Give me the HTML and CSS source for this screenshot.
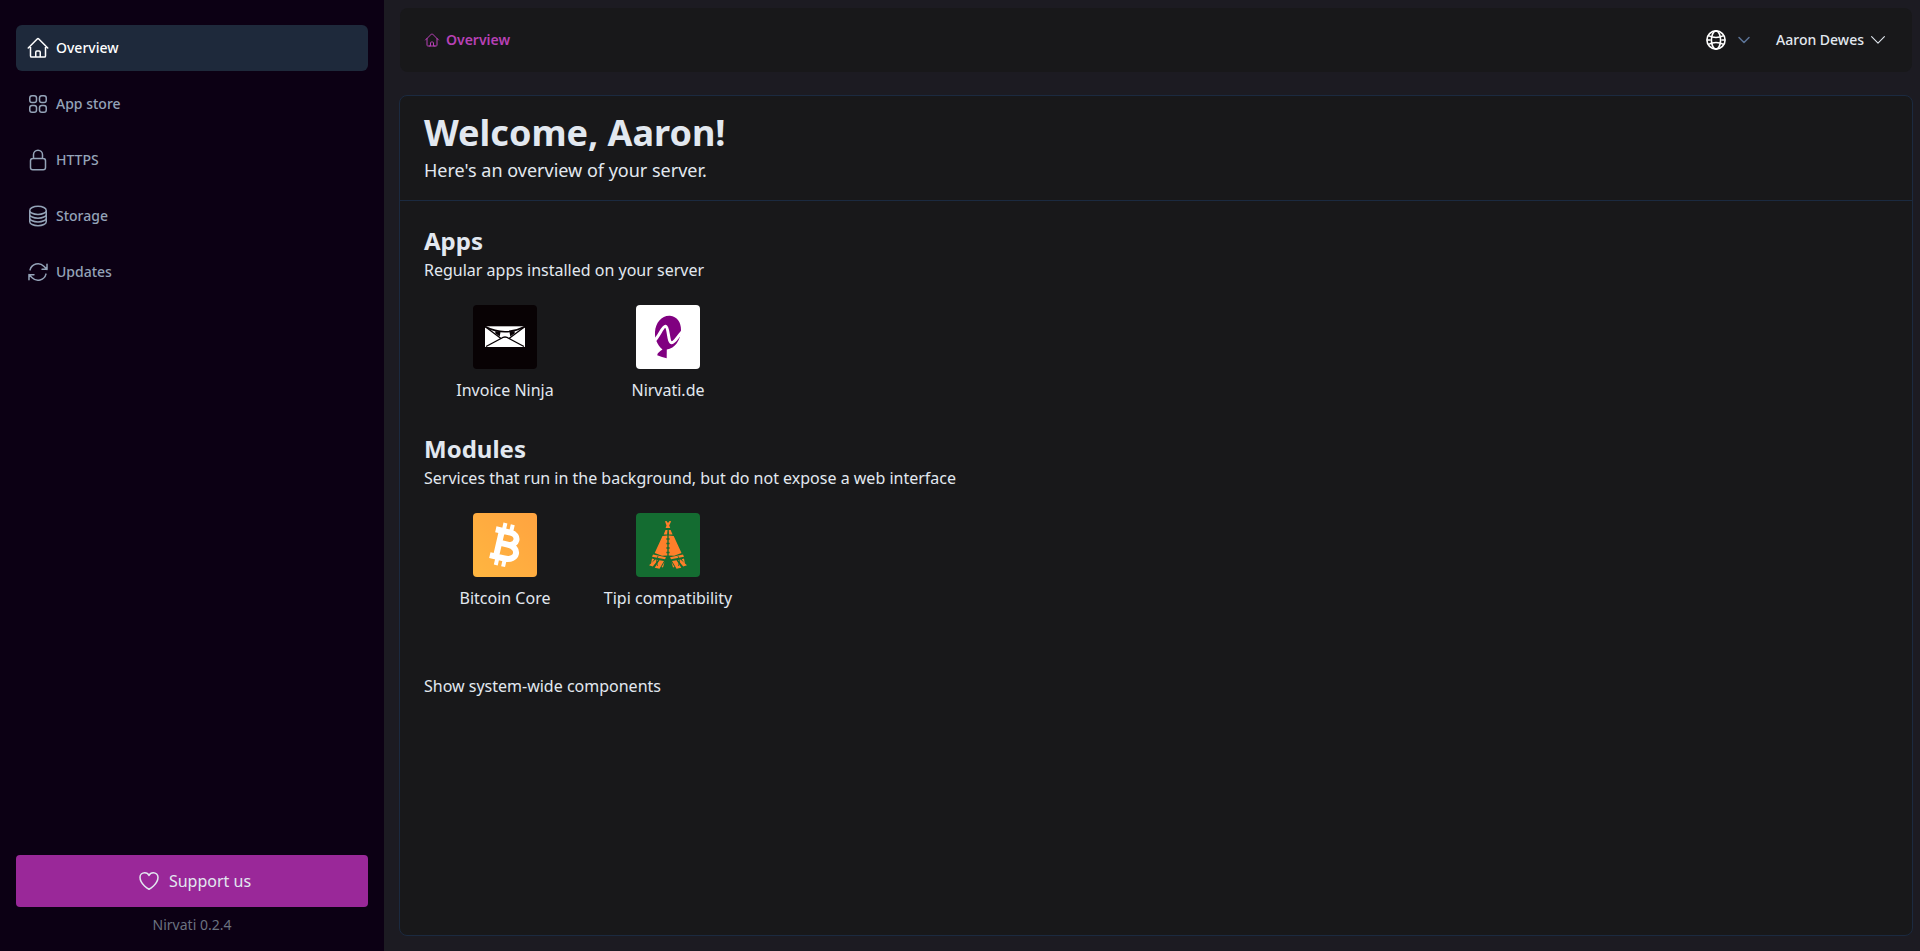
FILE: index.html
```html
<!DOCTYPE html>
<html lang="en">
<head>
    <meta charset="UTF-8">
    <meta name="viewport" content="width=device-width, initial-scale=1.0">
    <title>Nirvati</title>
    <link rel="stylesheet" href="styles.css">
</head>
<body>
    <aside class="sidebar">
        <nav class="menu">
            <a class="menu-item active">
                <svg class="icon" viewBox="0 0 24 24"><path d="m2.25 12 8.954-8.955c.44-.439 1.152-.439 1.591 0L21.75 12M4.5 9.75v10.125c0 .621.504 1.125 1.125 1.125H9.75v-4.875c0-.621.504-1.125 1.125-1.125h2.25c.621 0 1.125.504 1.125 1.125V21h4.125c.621 0 1.125-.504 1.125-1.125V9.75M8.25 21h8.25"/></svg>
                <span>Overview</span>
            </a>
            <a class="menu-item">
                <svg class="icon" viewBox="0 0 24 24"><path d="M3.75 6A2.25 2.25 0 0 1 6 3.75h2.25A2.25 2.25 0 0 1 10.5 6v2.25a2.25 2.25 0 0 1-2.25 2.25H6a2.25 2.25 0 0 1-2.25-2.25V6ZM3.75 15.75A2.25 2.25 0 0 1 6 13.5h2.25a2.25 2.25 0 0 1 2.25 2.25V18a2.25 2.25 0 0 1-2.25 2.25H6A2.25 2.25 0 0 1 3.75 18v-2.25ZM13.5 6a2.25 2.25 0 0 1 2.25-2.25H18A2.25 2.25 0 0 1 20.25 6v2.25A2.25 2.25 0 0 1 18 10.5h-2.25a2.25 2.25 0 0 1-2.25-2.25V6ZM13.5 15.75a2.25 2.25 0 0 1 2.25-2.25H18a2.25 2.25 0 0 1 2.25 2.25V18A2.25 2.25 0 0 1 18 20.25h-2.25A2.25 2.25 0 0 1 13.5 18v-2.25Z"/></svg>
                <span>App store</span>
            </a>
            <a class="menu-item">
                <svg class="icon" viewBox="0 0 24 24"><path d="M16.5 10.5V6.75a4.5 4.5 0 1 0-9 0v3.75m-.75 11.25h10.5a2.25 2.25 0 0 0 2.25-2.25v-6.75a2.25 2.25 0 0 0-2.25-2.25H6.75a2.25 2.25 0 0 0-2.25 2.25v6.75a2.25 2.25 0 0 0 2.25 2.25Z"/></svg>
                <span>HTTPS</span>
            </a>
            <a class="menu-item">
                <svg class="icon" viewBox="0 0 24 24"><path d="M20.25 6.375c0 2.278-3.694 4.125-8.25 4.125S3.75 8.653 3.75 6.375m16.5 0c0-2.278-3.694-4.125-8.25-4.125S3.75 4.097 3.75 6.375m16.5 0v11.25c0 2.278-3.694 4.125-8.25 4.125s-8.25-1.847-8.25-4.125V6.375m16.5 0v3.75m-16.5-3.75v3.75m16.5 0v3.75C20.25 16.153 16.556 18 12 18s-8.25-1.847-8.25-4.125v-3.75m16.5 0c0 2.278-3.694 4.125-8.25 4.125s-8.25-1.847-8.25-4.125"/></svg>
                <span>Storage</span>
            </a>
            <a class="menu-item">
                <svg class="icon" viewBox="0 0 24 24"><path d="M16.023 9.348h4.992v-.001M2.985 19.644v-4.992m0 0h4.992m-4.993 0 3.181 3.183a8.25 8.25 0 0 0 13.803-3.7M4.031 9.865a8.25 8.25 0 0 1 13.803-3.7l3.181 3.182m0-4.991v4.99"/></svg>
                <span>Updates</span>
            </a>
        </nav>
        <div class="sidebar-footer">
            <a class="support">
                <svg class="icon" viewBox="0 0 24 24"><path d="M21 8.25c0-2.485-2.099-4.5-4.688-4.5-1.935 0-3.597 1.126-4.312 2.733-.715-1.607-2.377-2.733-4.313-2.733C5.1 3.75 3 5.765 3 8.25c0 7.22 9 12 9 12s9-4.78 9-12Z"/></svg>
                <span>Support us</span>
            </a>
            <p class="version">Nirvati 0.2.4</p>
        </div>
    </aside>

    <main class="content">
        <header class="topbar">
            <div class="breadcrumb">
                <svg class="icon small" viewBox="0 0 24 24"><path d="m2.25 12 8.954-8.955c.44-.439 1.152-.439 1.591 0L21.75 12M4.5 9.75v10.125c0 .621.504 1.125 1.125 1.125H9.75v-4.875c0-.621.504-1.125 1.125-1.125h2.25c.621 0 1.125.504 1.125 1.125V21h4.125c.621 0 1.125-.504 1.125-1.125V9.75M8.25 21h8.25"/></svg>
                <span>Overview</span>
            </div>
            <div class="topbar-right">
                <div class="language">
                    <svg class="globe" viewBox="0 0 20 20">
                        <circle cx="10" cy="10" r="9.1"/>
                        <ellipse cx="10" cy="10" rx="4.6" ry="9.1"/>
                        <path d="M2.3 5.6c4.6 2.2 10.8 2.2 15.4 0M2.3 14.4c4.6-2.2 10.8-2.2 15.4 0M1 10h3.6M15.4 10H19"/>
                    </svg>
                    <svg class="icon small chevron" viewBox="0 0 24 24"><path d="m19.5 8.25-7.5 7.5-7.5-7.5"/></svg>
                </div>
                <div class="user">
                    <span>Aaron Dewes</span>
                    <svg class="icon small" viewBox="0 0 16 16"><path d="m1.6 4.7 6.4 6.4 6.4-6.4"/></svg>
                </div>
            </div>
        </header>

        <section class="card">
            <div class="card-header">
                <h1>Welcome, Aaron!</h1>
                <p>Here's an overview of your server.</p>
            </div>
            <div class="card-body">
                <h2>Apps</h2>
                <p>Regular apps installed on your server</p>
                <div class="apps">
                    <a class="app">
                        <svg class="app-icon" viewBox="0 0 64 64">
                            <rect width="64" height="64" fill="#080204"/>
                            <rect x="12" y="21.3" width="40" height="20.7" fill="#fff"/>
                            <path d="M12 21.5 28 33.5M52 21.5 36 33.5M13 41.5 28 33.5Q32 30.5 36 33.5L51 41.5" fill="none" stroke="#080204" stroke-width="1.4"/>
                            <path d="M12 21.5Q32 32 52 21.5" fill="none" stroke="#080204" stroke-width="1.5"/>
                            <path d="m22.5 26 5 1.2-.8 4.2-4.5-3.2ZM41.5 26l-5 1.2.8 4.2 4.5-3.2Z" fill="#080204"/>
                        </svg>
                        <span>Invoice Ninja</span>
                    </a>
                    <a class="app">
                        <svg class="app-icon" viewBox="0 0 64 64">
                            <rect width="64" height="64" fill="#fff"/>
                            <path d="M34 10.7C41 11.2 45.2 17.5 45 25 44.7 35 39 43.5 30.8 44.5L30.7 53.2 26 52 21.2 50.3C21.3 48 24 46.5 26.5 44.6 21 40 18.5 33 19 27 19.5 17.5 26 10.2 34 10.7Z" fill="#800080"/>
                            <path d="M18.5 35.5C23 32 26.5 21 29.5 21.3 33 22 31.8 37.8 35.7 37.7 39 37.5 41.5 31.5 46 27" fill="none" stroke="#fff" stroke-width="3"/>
                        </svg>
                        <span>Nirvati.de</span>
                    </a>
                </div>
                <h2>Modules</h2>
                <p>Services that run in the background, but do not expose a web interface</p>
                <div class="apps">
                    <a class="app">
                        <svg class="app-icon" viewBox="0 0 64 64">
                            <defs>
                                <linearGradient id="btc" x1="0" y1="1" x2="1" y2="0">
                                    <stop offset="0" stop-color="#ffb640"/>
                                    <stop offset="1" stop-color="#ffa340"/>
                                </linearGradient>
                            </defs>
                            <rect width="64" height="64" fill="url(#btc)"/>
                            <g transform="rotate(13 32 32)" fill="none" stroke="#fff">
                                <path d="M19.5 18.7H34.5C44.5 18.7 44.5 31 34.5 31H26M34.5 31C48 31 48 45.3 34.5 45.3H19.5M25.8 18V46" stroke-width="6"/>
                                <path d="M27.5 10.5v7M35 10.5v7M27.5 46.500v7M35 46.500v7" stroke-width="4"/>
                            </g>
                        </svg>
                        <span>Bitcoin Core</span>
                    </a>
                    <a class="app">
                        <svg class="app-icon" viewBox="0 0 64 64">
                            <rect width="64" height="64" fill="#146c31"/>
                            <g fill="#ff7f2a">
                                <path d="m29 8.300 1.500-.3 1.500 2 1.500-2 1.700.3-2 4.200 1 2.500h-4.600l.9-2.500ZM29.500 17h2l-.4 4.500h-3.400ZM32.800 17h1.800l2 4.500H33ZM26.500 23l4.800-.6V42.500l-5.300.2-7.300-2.700ZM32.700 22.400l5 .6L45.500 40l-7.300 2.700-5.500-.2Z"/>
                                <path d="m17 41.500 13 2.700-1 2-13-2.500ZM47 41.500l-13 2.700 1 2 13-2.500Z"/>
                                <path d="m16 45.500 2.300.7-3.300 4.500ZM19.500 46.500l2.500.5-5.200 6.500-3.800-1.200ZM23.500 47.300l4.500.7-4.500 7.700-4.800-1ZM28.500 49l-1.500 5.500-1.500-.5ZM48 45.500l-2.300.7 3.300 4.500ZM44.500 46.500l-2.500.5 5.200 6.500 3.800-1.200ZM40.500 47.300l-4.500.7 4.500 7.700 4.800-1ZM35.500 49l1.500 5.500 1.500-.5Z"/>
                            </g>
                            <path d="M30.400 26h3.200M30.400 30.500h3.200M30.400 35h3.200M30.400 39.500h3.200" stroke="#146c31" stroke-width="1.500"/>
                            <path d="m22 43-1.500 5 1 5M42 43l1.500 5-1 5" fill="none" stroke="#146c31" stroke-width=".8"/>
                        </svg>
                        <span>Tipi compatibility</span>
                    </a>
                </div>
                <p class="show-system">Show system-wide components</p>
            </div>
        </section>
    </main>
</body>
</html>
```
FILE: styles.css
```css
* {
    box-sizing: border-box;
}
body {
    display: flex;
    height: 100vh;
    margin: 0;
    font-family: "Noto Sans", sans-serif;
    font-size: 16px;
    line-height: 24px;
    background-color: #1c1b22;
    color: #e2e8f0;
}
h1, h2, p {
    margin: 0;
}
.icon {
    flex-shrink: 0;
    width: 24px;
    height: 24px;
    fill: none;
    stroke: currentColor;
    stroke-width: 1.5;
    stroke-linecap: round;
    stroke-linejoin: round;
}
.icon.small {
    width: 16px;
    height: 16px;
}
.sidebar {
    display: flex;
    flex-direction: column;
    justify-content: space-between;
    width: 384px;
    padding: 25px 16px 16px;
    background-color: #0c0014;
}
.menu {
    display: flex;
    flex-direction: column;
    gap: 10px;
}
.menu-item {
    display: flex;
    align-items: center;
    gap: 6px;
    height: 46px;
    padding: 0 10px;
    border-radius: 6px;
    font-size: 14px;
    font-weight: 500;
    color: #94a3b8;
}
.menu-item.active {
    background-color: #1e293b;
    color: #fff;
}
.support {
    display: flex;
    align-items: center;
    justify-content: center;
    gap: 8px;
    height: 52px;
    padding-left: 4px;
    border-radius: 4px;
    background-color: #9a2899;
}
.version {
    margin-top: 8px;
    font-size: 14px;
    line-height: 20px;
    text-align: center;
    color: #6b7280;
}
.content {
    display: flex;
    flex: 1;
    flex-direction: column;
    gap: 23px;
    padding: 8px 7px 15px 15px;
}
.topbar {
    display: flex;
    align-items: center;
    justify-content: space-between;
    height: 64px;
    margin: 0 1px;
    padding: 0 26px 0 24px;
    border-radius: 8px;
    background-color: #18181a;
    font-size: 14px;
}
.breadcrumb {
    display: flex;
    align-items: center;
    gap: 6px;
    font-weight: 600;
    color: #b741b5;
}
.topbar-right, .language, .user {
    display: flex;
    align-items: center;
}
.topbar-right {
    gap: 24px;
}
.language {
    gap: 10px;
}
.globe {
    width: 20px;
    height: 20px;
    fill: none;
    stroke: #fff;
    stroke-width: 1.6;
}
.chevron {
    color: #5b7396;
    stroke-width: 2.3;
}
.user {
    gap: 6px;
    font-weight: 500;
}
.user .icon {
    stroke-width: 1.1;
}
.card {
    flex: 1;
    border: 1px solid #1b2a40;
    border-radius: 8px;
    background-color: #18181a;
}
.card-header {
    height: 105px;
    padding: 17px 24px 0;
    border-bottom: 1px solid #1b2a40;
}
.card-header h1 {
    font-size: 36px;
    line-height: 40px;
}
.card-header p {
    margin-top: 3px;
    font-size: 18px;
    line-height: 28px;
}
.card-body {
    padding: 24px;
}
.card-body h2 {
    font-size: 24px;
    line-height: 32px;
}
.card-body p {
    margin-top: 1px;
}
.apps {
    display: flex;
    gap: 1px;
    height: 151px;
    padding-top: 23px;
}
.app {
    display: flex;
    flex-direction: column;
    align-items: center;
    gap: 9px;
    width: 162px;
}
.app-icon {
    width: 64px;
    height: 64px;
    border-radius: 4px;
}
.card-body .show-system {
    margin-top: 33px;
}
```
